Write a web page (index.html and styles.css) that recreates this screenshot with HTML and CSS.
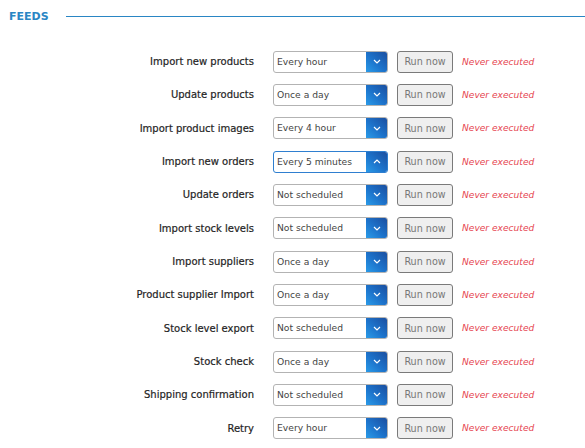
FILE: index.html
```html
<!DOCTYPE html>
<html>
<head>
<meta charset="utf-8">
<link rel="stylesheet" href="styles.css">
</head>
<body>
<div class="section-head">
  <span class="section-title">FEEDS</span>
  <span class="section-rule"></span>
</div>
<div class="feeds">
  <div class="row"><span class="label">Import new products</span><div class="select"><span class="value">Every hour</span><span class="arrow"><svg width="8" height="5" viewBox="0 0 8 5"><path d="M1 1l3 3 3-3" fill="none" stroke="#fff" stroke-width="1.2"/></svg></span></div><button class="run">Run now</button><span class="status">Never executed</span></div>
  <div class="row"><span class="label">Update products</span><div class="select"><span class="value">Once a day</span><span class="arrow"><svg width="8" height="5" viewBox="0 0 8 5"><path d="M1 1l3 3 3-3" fill="none" stroke="#fff" stroke-width="1.2"/></svg></span></div><button class="run">Run now</button><span class="status">Never executed</span></div>
  <div class="row"><span class="label">Import product images</span><div class="select"><span class="value">Every 4 hour</span><span class="arrow"><svg width="8" height="5" viewBox="0 0 8 5"><path d="M1 1l3 3 3-3" fill="none" stroke="#fff" stroke-width="1.2"/></svg></span></div><button class="run">Run now</button><span class="status">Never executed</span></div>
  <div class="row"><span class="label">Import new orders</span><div class="select focus"><span class="value">Every 5 minutes</span><span class="arrow"><svg width="8" height="5" viewBox="0 0 8 5"><path d="M1 4l3-3 3 3" fill="none" stroke="#fff" stroke-width="1.2"/></svg></span></div><button class="run">Run now</button><span class="status">Never executed</span></div>
  <div class="row"><span class="label">Update orders</span><div class="select"><span class="value">Not scheduled</span><span class="arrow"><svg width="8" height="5" viewBox="0 0 8 5"><path d="M1 1l3 3 3-3" fill="none" stroke="#fff" stroke-width="1.2"/></svg></span></div><button class="run">Run now</button><span class="status">Never executed</span></div>
  <div class="row"><span class="label">Import stock levels</span><div class="select"><span class="value">Not scheduled</span><span class="arrow"><svg width="8" height="5" viewBox="0 0 8 5"><path d="M1 1l3 3 3-3" fill="none" stroke="#fff" stroke-width="1.2"/></svg></span></div><button class="run">Run now</button><span class="status">Never executed</span></div>
  <div class="row"><span class="label">Import suppliers</span><div class="select"><span class="value">Once a day</span><span class="arrow"><svg width="8" height="5" viewBox="0 0 8 5"><path d="M1 1l3 3 3-3" fill="none" stroke="#fff" stroke-width="1.2"/></svg></span></div><button class="run">Run now</button><span class="status">Never executed</span></div>
  <div class="row"><span class="label">Product supplier Import</span><div class="select"><span class="value">Once a day</span><span class="arrow"><svg width="8" height="5" viewBox="0 0 8 5"><path d="M1 1l3 3 3-3" fill="none" stroke="#fff" stroke-width="1.2"/></svg></span></div><button class="run">Run now</button><span class="status">Never executed</span></div>
  <div class="row"><span class="label">Stock level export</span><div class="select"><span class="value">Not scheduled</span><span class="arrow"><svg width="8" height="5" viewBox="0 0 8 5"><path d="M1 1l3 3 3-3" fill="none" stroke="#fff" stroke-width="1.2"/></svg></span></div><button class="run">Run now</button><span class="status">Never executed</span></div>
  <div class="row"><span class="label">Stock check</span><div class="select"><span class="value">Once a day</span><span class="arrow"><svg width="8" height="5" viewBox="0 0 8 5"><path d="M1 1l3 3 3-3" fill="none" stroke="#fff" stroke-width="1.2"/></svg></span></div><button class="run">Run now</button><span class="status">Never executed</span></div>
  <div class="row"><span class="label">Shipping confirmation</span><div class="select"><span class="value">Not scheduled</span><span class="arrow"><svg width="8" height="5" viewBox="0 0 8 5"><path d="M1 1l3 3 3-3" fill="none" stroke="#fff" stroke-width="1.2"/></svg></span></div><button class="run">Run now</button><span class="status">Never executed</span></div>
  <div class="row"><span class="label">Retry</span><div class="select"><span class="value">Every hour</span><span class="arrow"><svg width="8" height="5" viewBox="0 0 8 5"><path d="M1 1l3 3 3-3" fill="none" stroke="#fff" stroke-width="1.2"/></svg></span></div><button class="run">Run now</button><span class="status">Never executed</span></div>
</div>
</body>
</html>
```
FILE: styles.css
```css
html, body {
  margin: 0;
  padding: 0;
  background: #fff;
  font-family: "DejaVu Sans", sans-serif;
  color: #333;
}
.section-head {
  display: flex;
  align-items: center;
  height: 33px;
  padding-left: 9px;
}
.section-title {
  font-size: 11px;
  font-weight: 600;
  color: #2a86c4;
}
.section-rule {
  flex: 1;
  height: 1px;
  background: #2a86c4;
  margin-left: 17px;
}
.feeds {
  padding-top: 12px;
  display: grid;
  grid-auto-rows: 33.33px;
}
.row {
  display: grid;
  grid-template-columns: 264px 115px 56px auto;
  column-gap: 9px;
  align-items: center;
}
.label {
  justify-self: end;
  margin-right: 10px;
  font-size: 10px;
  color: #1f1f1f;
  -webkit-text-stroke: 0.2px #1f1f1f;
}
.select {
  display: flex;
  height: 22px;
  box-sizing: border-box;
  border: 1px solid #b3b3b3;
  border-radius: 3px;
  overflow: hidden;
  background: #fff;
}
.select.focus {
  border-color: #2f7fd0;
}
.value {
  flex: 1;
  font-size: 9.2px;
  line-height: 20px;
  padding-left: 3px;
  color: #444;
}
.arrow {
  width: 21px;
  display: flex;
  align-items: center;
  justify-content: center;
  background: linear-gradient(to bottom left, #1b4fa0 0%, #1d74cc 55%, #2a9be8 100%);
}
.run {
  height: 22px;
  box-sizing: border-box;
  border: 1px solid #7a7a7a;
  border-radius: 3px;
  background: #efefef;
  color: #777;
  font-family: inherit;
  font-size: 9.6px;
  padding: 0;
}
.status {
  font-size: 9.1px;
  font-style: italic;
  color: #e64550;
}
```
